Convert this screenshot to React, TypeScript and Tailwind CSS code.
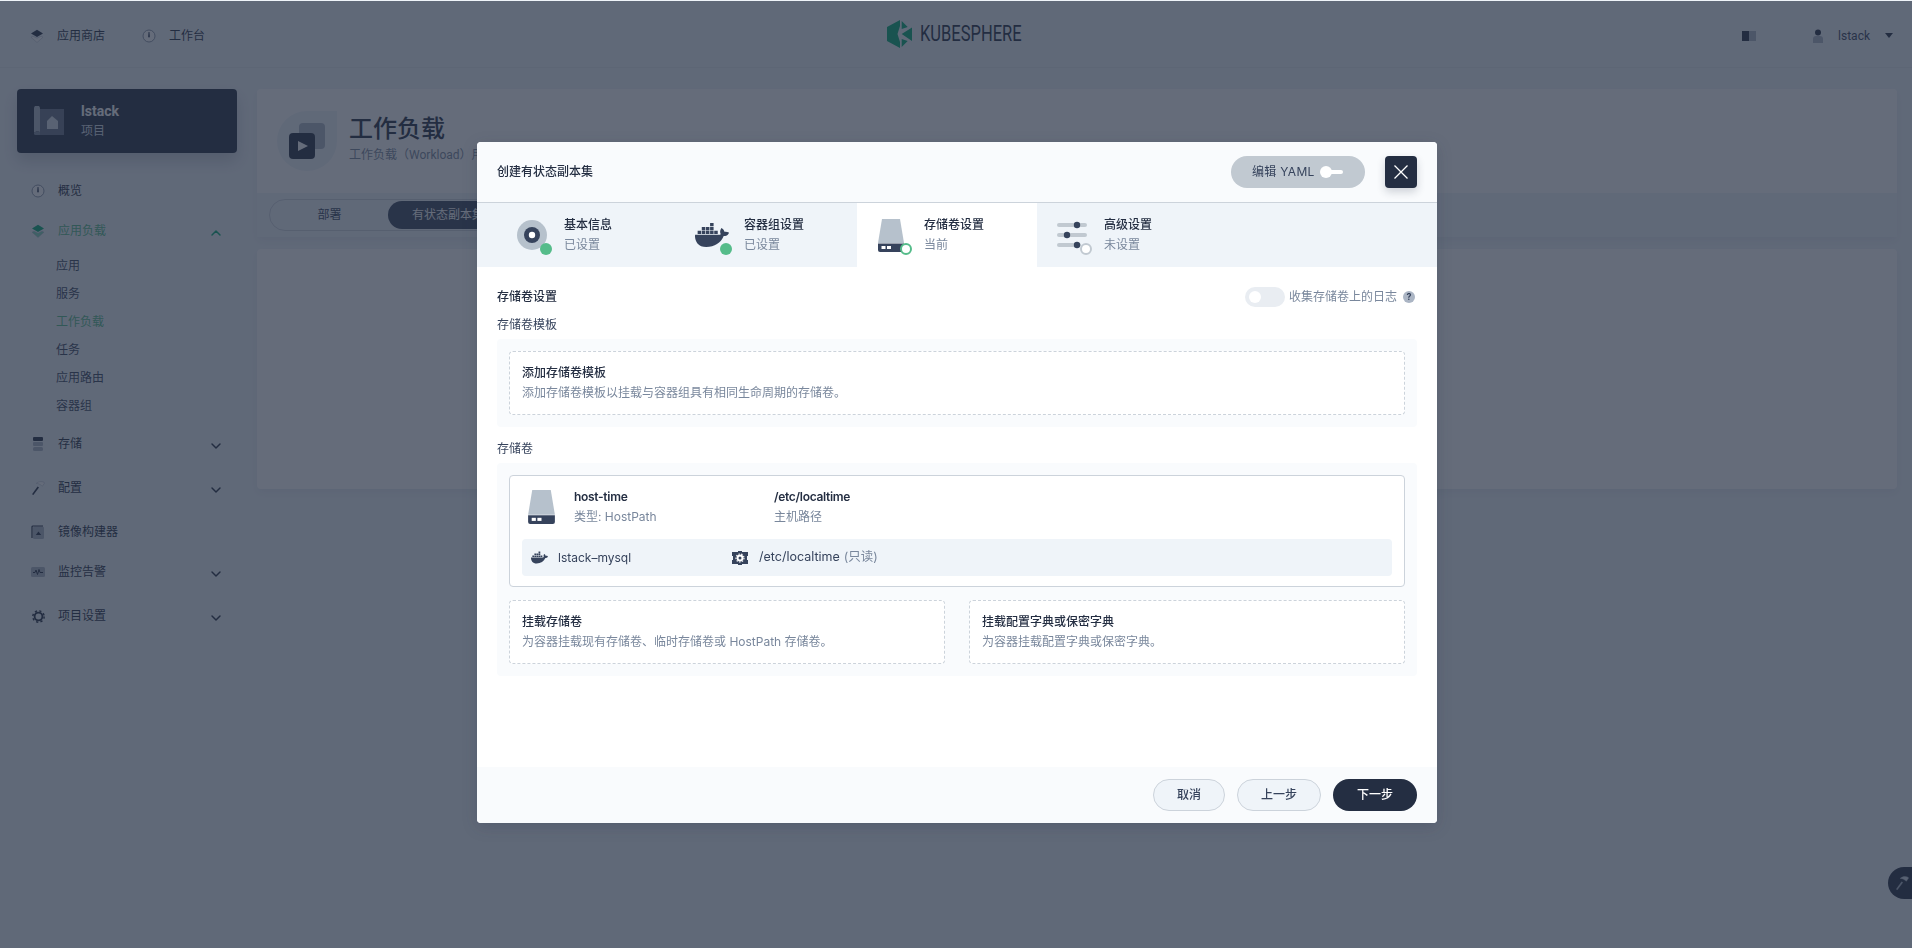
import { FaDocker } from "react-icons/fa";
import { ChevronDown, ChevronUp } from "lucide-react";
import type { ReactNode } from "react";

function LayersIcon({ top = "#242e42", bottom = "#ffffff" }: { top?: string; bottom?: string }) {
  return (
    <svg width="14" height="14" viewBox="0 0 14 14">
      <path d="M1 8.200 3 7.200 7 9.200 11 7.200 13 8.200 7 13.500Z" fill={bottom} stroke="#abb5c4" strokeWidth=".5" />
      <path d="M7 .8 13 4.400 7 8 1 4.400Z" fill={top} />
    </svg>
  );
}

function DashIcon() {
  return (
    <svg width="14" height="14" viewBox="0 0 14 14">
      <circle cx="7" cy="7" r="6" fill="#ffffff" stroke="#8a96a8" strokeWidth="1" />
      <path d="M6.500 3h1l.4 4.500a.9.9 0 1 1-1.800 0Z" fill="#36435c" />
    </svg>
  );
}

function DbIcon() {
  return (
    <svg width="12" height="14" viewBox="0 0 12 14">
      <rect x="1" y="0" width="10" height="4" rx="1" fill="#242e42" />
      <rect x="1" y="5" width="10" height="4" rx="1" fill="#abb5c4" />
      <rect x="1" y="10" width="10" height="4" rx="1.500" fill="#abb5c4" />
    </svg>
  );
}

function HammerIcon({ dark = "#242e42", light = "#ffffff" }: { dark?: string; light?: string }) {
  return (
    <svg width="14" height="14" viewBox="0 0 14 14">
      <path d="M5.200 2.400C7.500.3 10.500.2 13 1.200l.6.8-2.200 3.200-1-.7C9 3.300 7.300 2.400 5.200 2.400Z" fill={light} stroke="#abb5c4" strokeWidth=".5" />
      <path d="M1 13.200 6.600 5.400 8 6.500 2.400 14Z" fill={dark} />
    </svg>
  );
}

function ImageBuildIcon() {
  return (
    <svg width="14" height="14" viewBox="0 0 14 14">
      <rect x="2" y="1.500" width="11" height="12.500" rx="1.500" fill="#abb5c4" />
      <path d="M1 13V2a1 1 0 0 1 1-1h10" fill="none" stroke="#242e42" strokeWidth="1.200" />
      <path d="M7.500 6.500 10.200 10H4.800Z" fill="#242e42" />
    </svg>
  );
}

function PulseIcon() {
  return (
    <svg width="14" height="10" viewBox="0 0 14 10">
      <rect width="14" height="10" rx="1.500" fill="#abb5c4" />
      <path d="M2 5.500h2l1-2.500 1.500 4.500L8 2.500l1 3h3" fill="none" stroke="#242e42" strokeWidth="1" />
    </svg>
  );
}

function GearIcon() {
  return (
    <svg width="13" height="13" viewBox="0 0 14 14">
      <circle cx="7" cy="7" r="6.100" fill="none" stroke="#242e42" strokeWidth="1.600" strokeDasharray="2.400 2.400" />
      <circle cx="7" cy="7" r="4.200" fill="none" stroke="#242e42" strokeWidth="2" />
    </svg>
  );
}

function ProjectIcon() {
  return (
    <svg width="30" height="30" viewBox="0 0 30 30">
      <rect x="5" y="3" width="25" height="26" fill="#667085" />
      <path d="M0 2.500a3 3 0 0 1 6 0V26c-2-1-4-1-6 1Z" fill="#abb5c4" />
      <path d="M0 27c2-2 4-2 6-1v3H1.500A1.500 1.500 0 0 1 0 27.500Z" fill="#7b869a" />
      <path d="M18 10l6 5v8H13v-8Z" fill="#d5dee7" />
    </svg>
  );
}

function DiskIcon({ width = 26, height = 33 }: { width?: number; height?: number }) {
  return (
    <svg width={width} height={height} viewBox="0 0 26 33">
      <path d="M4 0h18l4 24H0Z" fill="#b6c1cc" />
      <path d="M0 24.500h26V31a2 2 0 0 1-2 2H2a2 2 0 0 1-2-2Z" fill="#36435c" />
      <rect x="3.500" y="27" width="4" height="3" fill="#fff" />
      <rect x="9" y="27" width="4" height="3" fill="#fff" />
    </svg>
  );
}

function DiscIcon() {
  return (
    <svg width="30" height="30" viewBox="0 0 30 30">
      <circle cx="15" cy="15" r="15" fill="#b6c1cc" />
      <circle cx="15" cy="15" r="8" fill="#36435c" />
      <circle cx="15" cy="15" r="3.200" fill="#fff" />
    </svg>
  );
}

function SlidersIcon() {
  return (
    <svg width="30" height="30" viewBox="0 0 30 30">
      <rect x="0" y="3" width="30" height="4" rx="2" fill="#c1c9d1" />
      <rect x="0" y="13" width="30" height="4" rx="2" fill="#c1c9d1" />
      <rect x="0" y="23" width="24" height="4" rx="2" fill="#c1c9d1" />
      <circle cx="20" cy="5" r="3.200" fill="#36435c" />
      <circle cx="10" cy="15" r="3.200" fill="#36435c" />
      <circle cx="20" cy="25" r="3.200" fill="#36435c" />
    </svg>
  );
}

function MountIcon() {
  return (
    <svg width="16" height="14" viewBox="0 0 16 14">
      <path d="M0 1h6V0h4v1h6v4h-1v4h1v4h-6v1H6v-1H0V9h1V5H0Z" fill="#36435c" />
      <circle cx="8" cy="7" r="3.400" fill="#fff" />
      <circle cx="8" cy="7" r="4" fill="none" stroke="#fff" strokeWidth="1.200" strokeDasharray="1.400 1.400" />
      <circle cx="8" cy="7" r="1.500" fill="#36435c" />
    </svg>
  );
}

function NavRow({ icon, label, chevron, active, className }: { icon: ReactNode; label: string; chevron?: "up" | "down"; active?: boolean; className: string }) {
  return (
    <div className={`flex h-9 items-center pl-3 pr-[13px] ${className}`}>
      <div className="mr-[11px] flex w-[18px] justify-center">{icon}</div>
      <span className={`text-xs ${active ? "text-[#55bc8a]" : "text-[#242e42]"}`}>{label}</span>
      {chevron === "up" && <ChevronUp className="ml-auto mt-1 h-4 w-4 text-[#00aa72]" strokeWidth={2.200} />}
      {chevron === "down" && <ChevronDown className="ml-auto mt-1 h-4 w-4 text-[#242e42]" strokeWidth={2.200} />}
    </div>
  );
}

function Sidebar() {
  const subItems = ["应用", "服务", "工作负载", "任务", "应用路由", "容器组"];
  return (
    <aside className="w-[220px] shrink-0">
      <div className="flex h-16 items-center rounded bg-[#242e42] pl-[17px] shadow-[0_8px_16px_0_rgba(36,46,66,0.2)]">
        <ProjectIcon />
        <div className="ml-[17px]">
          <div className="text-sm leading-5 font-bold text-white">lstack</div>
          <div className="text-xs leading-5 text-[#d5dee7]">项目</div>
        </div>
      </div>
      <nav>
        <NavRow className="mt-5" icon={<DashIcon />} label="概览" />
        <NavRow className="mt-1" icon={<LayersIcon top="#00aa72" bottom="#7fd5b8" />} label="应用负载" chevron="up" active />
        <div className="mt-[3px] pl-[39px]">
          {subItems.map((s) => (
            <div key={s} className={`h-7 text-xs leading-7 ${s === "工作负载" ? "text-[#55bc8a]" : "text-[#36435c]"}`}>
              {s}
            </div>
          ))}
        </div>
        <NavRow className="mt-[6px]" icon={<DbIcon />} label="存储" chevron="down" />
        <NavRow className="mt-2" icon={<HammerIcon />} label="配置" chevron="down" />
        <NavRow className="mt-2" icon={<ImageBuildIcon />} label="镜像构建器" />
        <NavRow className="mt-1" icon={<PulseIcon />} label="监控告警" chevron="down" />
        <NavRow className="mt-2" icon={<GearIcon />} label="项目设置" chevron="down" />
      </nav>
    </aside>
  );
}

function TopBar() {
  return (
    <header className="flex h-[68px] items-center border-b border-[#e3e9ef] pt-1 font-[Roboto,'Noto_Sans_CJK_SC',sans-serif]">
      <div className="flex flex-1 items-center pl-[29px] text-xs text-[#242e42]">
        <div className="mr-3 flex w-4 justify-center"><LayersIcon /></div>
        <span className="mr-[36px]">应用商店</span>
        <div className="mr-3 flex w-4 justify-center"><DashIcon /></div>
        <span>工作台</span>
      </div>
      <div className="-mt-1 mr-[14px] flex items-center">
        <svg width="25" height="28" viewBox="0 0 25 28" className="mr-2">
          <path d="M13 0 0 7v14l13 7v-6l-2.500-8L13 6Z" fill="#00aa72" />
          <path d="M14.700 1 20.700 7l-6 2ZM14.700 14 25 7.500V21ZM14.700 27l6-6-6-2Z" fill="#00aa72" />
        </svg>
        <div className="w-[102px]">
          <span className="inline-block origin-left scale-x-[0.75] text-[22px] leading-7 text-[#242e42]">KUBESPHERE</span>
        </div>
      </div>
      <div className="flex flex-1 items-center justify-end pr-[19px] text-xs text-[#36435c]">
        <div className="mr-[57px] flex h-[10px] w-[14px]">
          <div className="w-[7px] bg-[#242e42]" />
          <div className="w-[7px] bg-[#abb5c4]" />
        </div>
        <svg width="10" height="14" viewBox="0 0 10 14" className="mr-[15px]">
          <circle cx="5" cy="3.500" r="3" fill="#242e42" />
          <path d="M0 14V10a3 3 0 0 1 3-3h4a3 3 0 0 1 3 3v4Z" fill="#abb5c4" />
        </svg>
        <span className="mr-[15px]">lstack</span>
        <div className="h-0 w-0 border-x-[4px] border-t-[5px] border-x-transparent border-t-[#242e42]" />
      </div>
    </header>
  );
}

function MainPanel() {
  return (
    <main className="ml-5 w-[1640px]">
      <div className="rounded bg-white shadow-[0_4px_8px_0_rgba(36,46,66,0.06)]">
        <div className="flex h-[104px] rounded-t bg-white pl-5 pt-[22px]">
          <div className="relative h-[60px] w-[60px] rounded-full rounded-tr-none bg-[#eff4f9]">
            <div className="absolute left-[22px] top-3 h-[26px] w-[26px] rounded bg-[#abb5c4]" />
            <div className="absolute left-3 top-[22px] flex h-[26px] w-[26px] items-center justify-center rounded bg-[#242e42]">
              <div className="ml-px h-0 w-0 border-y-[5.500px] border-l-[10px] border-y-transparent border-l-white" />
            </div>
          </div>
          <div className="ml-[12px] pt-[2px]">
            <div className="text-2xl leading-8 font-medium text-[#242e42]">工作负载</div>
            <div className="text-xs leading-5 text-[#79879c]">工作负载（Workload）用于</div>
          </div>
        </div>
        <div className="flex h-[44px] items-start bg-[#eff4f9] pl-3 pt-[6px]">
          <div className="flex h-8 items-center rounded-full border border-[#ccd3db] p-px text-xs">
            <div className="flex h-7 w-[117px] items-center justify-center text-[#36435c]">部署</div>
            <div className="flex h-7 w-[120px] items-center justify-center rounded-full bg-[#36435c] text-white">有状态副本集</div>
            <div className="w-[120px] text-center text-[#36435c]">守护进程集</div>
          </div>
        </div>
      </div>
      <div className="mt-3 h-[240px] rounded bg-white shadow-[0_4px_8px_0_rgba(36,46,66,0.06)]" />
    </main>
  );
}

function StepTab({ icon, title, sub, current, badge }: { icon: ReactNode; title: string; sub: string; current?: boolean; badge: "done" | "ring" | "idle" }) {
  return (
    <div className={`flex h-16 w-[180px] items-center pl-5 ${current ? "bg-white" : ""}`}>
      <div className="relative flex h-9 w-[47px] shrink-0 items-center">
        {icon}
        {badge === "done" && <span className="absolute left-[23px] top-[26px] h-3 w-3 rounded-full bg-[#55bc8a]" />}
        {badge === "ring" && <span className="absolute left-[23px] top-[26px] h-3 w-3 rounded-full border-2 border-[#55bc8a] bg-white" />}
        {badge === "idle" && <span className="absolute left-[23px] top-[26px] h-3 w-3 rounded-full border-2 border-[#c1c9d1] bg-white" />}
      </div>
      <div>
        <div className="text-xs leading-5 font-medium text-[#242e42]">{title}</div>
        <div className="text-xs leading-5 text-[#79879c]">{sub}</div>
      </div>
    </div>
  );
}

function DashedCard({ title, desc, className }: { title: string; desc: string; className: string }) {
  return (
    <div className={`h-16 rounded border border-dashed border-[#ccd3db] bg-white px-3 pt-[11px] ${className}`}>
      <div className="text-xs leading-5 font-medium text-[#242e42]">{title}</div>
      <div className="text-xs leading-5 text-[#79879c]">{desc}</div>
    </div>
  );
}

function Modal() {
  return (
    <div className="w-[960px] overflow-hidden rounded bg-white font-[Inter,'Noto_Sans_CJK_SC',sans-serif] shadow-[0_4px_16px_0_rgba(36,46,66,0.2)]">
      <div className="flex h-[61px] items-center border-b border-[#ccd3db] bg-[#f9fbfd] pl-5 pr-5">
        <div className="text-xs font-medium text-[#242e42]">创建有状态副本集</div>
        <div className="ml-auto flex h-8 w-[134px] items-center rounded-full bg-[#c1c9d1] pl-[21px] text-xs tracking-[0.3px] text-[#36435c]">
          编辑 YAML
          <div className="ml-[5px] flex items-center">
            <span className="h-3 w-3 rounded-full bg-white" />
            <span className="-ml-px h-1 w-3 rounded-r-full bg-white" />
          </div>
        </div>
        <div className="ml-5 flex h-8 w-8 items-center justify-center rounded bg-[#242e42] shadow-[0_4px_8px_0_rgba(36,46,66,0.2)]">
          <svg width="14" height="14" viewBox="0 0 14 14">
            <path d="M.5.5l13 13M13.500.5l-13 13" stroke="#fff" strokeWidth="1.300" fill="none" />
          </svg>
        </div>
      </div>
      <div className="flex h-16 bg-[#eff4f9] pl-5">
        <StepTab icon={<DiscIcon />} title="基本信息" sub="已设置" badge="done" />
        <StepTab icon={<FaDocker className="-ml-[2px] text-[34px] text-[#36435c]" />} title="容器组设置" sub="已设置" badge="done" />
        <StepTab icon={<div className="ml-px flex"><DiskIcon /></div>} title="存储卷设置" sub="当前" badge="ring" current />
        <StepTab icon={<SlidersIcon />} title="高级设置" sub="未设置" badge="idle" />
      </div>
      <div className="h-[500px] px-5 pt-5">
        <div className="flex h-5 items-center">
          <span className="text-xs font-medium text-[#242e42]">存储卷设置</span>
          <div className="ml-auto flex h-5 w-10 items-center rounded-full bg-[#e9edf2] pl-1">
            <span className="h-3 w-3 rounded-full bg-white" />
          </div>
          <span className="ml-1 text-xs text-[#79879c]">收集存储卷上的日志</span>
          <span className="ml-[6px] mr-[2px] flex h-3 w-3 items-center justify-center rounded-full bg-[#abb5c4] text-[9px] font-bold text-[#36435c]">?</span>
        </div>
        <div className="mt-2 text-xs leading-5 text-[#36435c]">存储卷模板</div>
        <div className="mt-1 rounded bg-[#f9fbfd] p-3">
          <DashedCard title="添加存储卷模板" desc="添加存储卷模板以挂载与容器组具有相同生命周期的存储卷。" className="" />
        </div>
        <div className="mt-3 text-xs leading-5 text-[#36435c]">存储卷</div>
        <div className="mt-1 rounded bg-[#f9fbfd] p-3">
          <div className="h-[112px] rounded border border-[#ccd3db] bg-white">
            <div className="flex pl-[18px] pt-[11px]">
              <div className="w-[46px] pt-[3px]"><DiskIcon width={27} height={34} /></div>
              <div className="w-[200px]">
                <div className="text-xs leading-5 font-semibold tracking-[-0.3px] text-[#242e42]">host-time</div>
                <div className="text-xs leading-5 text-[#79879c]">类型: HostPath</div>
              </div>
              <div>
                <div className="text-xs leading-5 font-semibold tracking-[-0.3px] text-[#242e42]">/etc/localtime</div>
                <div className="text-xs leading-5 text-[#79879c]">主机路径</div>
              </div>
            </div>
            <div className="mx-3 mt-3 flex h-[37px] items-center rounded bg-[#eff4f9] pl-[9px] text-xs text-[#36435c]">
              <FaDocker className="text-[17px]" />
              <span className="ml-[10px] w-[174px]">lstack–mysql</span>
              <MountIcon />
              <span className="ml-[11px] text-[12.500px]">/etc/localtime</span>
              <span className="ml-1 text-[12.500px] text-[#79879c]">(只读)</span>
            </div>
          </div>
          <div className="mt-[13px] flex gap-6">
            <DashedCard title="挂载存储卷" desc="为容器挂载现有存储卷、临时存储卷或 HostPath 存储卷。" className="w-[436px]" />
            <DashedCard title="挂载配置字典或保密字典" desc="为容器挂载配置字典或保密字典。" className="w-[436px]" />
          </div>
        </div>
      </div>
      <div className="flex h-[56px] justify-end gap-3 bg-[#f9fbfd] pr-5 pt-3">
        <div className="flex h-8 w-[72px] items-center justify-center rounded-full border border-[#ccd3db] bg-[#eff4f9] text-xs font-medium text-[#36435c]">取消</div>
        <div className="flex h-8 w-[84px] items-center justify-center rounded-full border border-[#ccd3db] bg-[#eff4f9] text-xs font-medium text-[#36435c]">上一步</div>
        <div className="flex h-8 w-[84px] items-center justify-center rounded-full bg-[#242e42] text-xs font-medium text-white">下一步</div>
      </div>
    </div>
  );
}

export default function App() {
  return (
    <div className="relative h-screen overflow-hidden bg-[#eff4f9]">
      <TopBar />
      <div className="flex pl-[17px] pt-[21px] font-[Roboto,'Noto_Sans_CJK_SC',sans-serif]">
        <Sidebar />
        <MainPanel />
      </div>
      <div className="absolute right-0 top-[867px] flex h-8 w-6 items-center rounded-l-full bg-[#242e42] pl-[7px]">
        <HammerIcon dark="#abb5c4" light="#d5dee7" />
      </div>
      <div className="fixed inset-x-0 bottom-0 top-px flex items-start justify-center bg-[#242e42]/70 pl-[2px] pt-[141px]">
        <Modal />
      </div>
    </div>
  );
}
